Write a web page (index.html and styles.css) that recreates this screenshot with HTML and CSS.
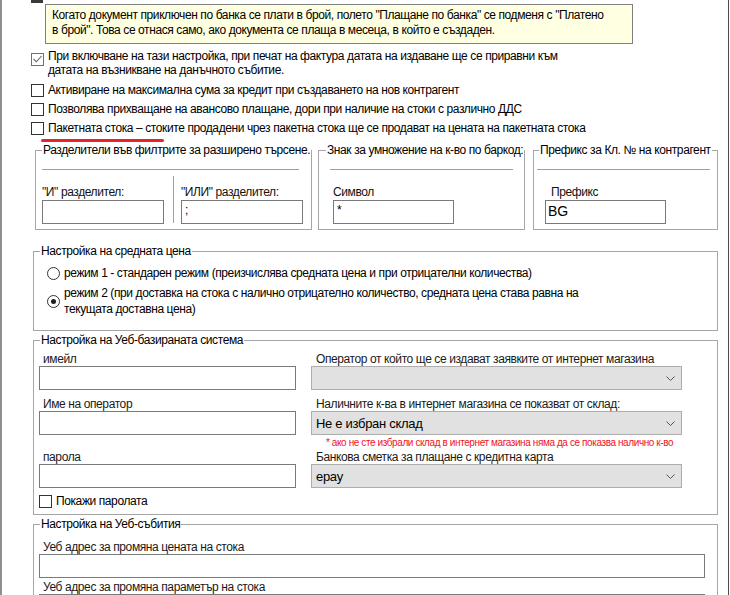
FILE: index.html
```html
<!DOCTYPE html>
<html lang="bg">
<head>
<meta charset="utf-8">
<title>Настройки</title>
<link rel="stylesheet" href="styles.css">
</head>
<body>
<div class="panel">
  <div class="cut-check"></div>
  <div class="tip">Когато документ приключен по банка се плати в брой, полето "Плащане по банка" се подменя с "Платено<br>в брой". Това се отнася само, ако документа се плаща в месеца, в който е създаден.</div>

  <div class="opts">
    <div class="opt opt-first">
      <span class="cb cb-on"><svg viewBox="0 0 11 11" width="11" height="11"><path d="M1.5 4.8 L4.3 7.8 L9.6 2" fill="none" stroke="#606060" stroke-width="1.1"/></svg></span>
      <span class="opt-text">При включване на тази настройка, при печат на фактура датата на издаване ще се приравни към<br>датата на възникване на данъчното събитие.</span>
    </div>
    <div class="opt">
      <span class="cb"></span>
      <span class="opt-text">Активиране на максимална сума за кредит при създаването на нов контрагент</span>
    </div>
    <div class="opt">
      <span class="cb"></span>
      <span class="opt-text">Позволява прихващане на авансово плащане, дори при наличие на стоки с различно ДДС</span>
    </div>
    <div class="opt">
      <span class="cb"></span>
      <span class="opt-text">Пакетната стока – стоките продадени чрез пакетна стока ще се продават на цената на пакетната стока</span>
    </div>
  </div>
  <div class="underline"></div>

  <div class="fs-row">
    <fieldset class="fs fs-sep">
      <legend>Разделители във филтрите за разширено търсене.</legend>
      <div class="fs-hr"></div>
      <div class="sep-cols">
        <div class="sep-col">
          <div class="lbl">"И" разделител:</div>
          <div class="inp"></div>
        </div>
        <div class="vline"></div>
        <div class="sep-col">
          <div class="lbl">"ИЛИ" разделител:</div>
          <div class="inp">;</div>
        </div>
      </div>
    </fieldset>
    <fieldset class="fs fs-mult">
      <legend>Знак за умножение на к-во по баркод:</legend>
      <div class="fs-hr"></div>
      <div class="fs-body">
        <div class="lbl">Символ</div>
        <div class="inp">*</div>
      </div>
    </fieldset>
    <fieldset class="fs fs-pref">
      <legend>Префикс за Кл. № на контрагент</legend>
      <div class="fs-hr"></div>
      <div class="fs-body">
        <div class="lbl lbl-pref">Префикс</div>
        <div class="inp inp-big">BG</div>
      </div>
    </fieldset>
  </div>

  <fieldset class="fs fs-wide fs-avg">
    <legend>Настройка на средната цена</legend>
    <div class="avg-body">
      <div class="radio-row">
        <span class="rb"></span>
        <span>режим 1 - стандарен режим (преизчислява средната цена и при отрицателни количества)</span>
      </div>
      <div class="radio-row">
        <span class="rb rb-on"></span>
        <span>режим 2 (при доставка на стока с налично отрицателно количество, средната цена става равна на<br>текущата доставна цена)</span>
      </div>
    </div>
  </fieldset>

  <fieldset class="fs fs-wide fs-web">
    <legend>Настройка на Уеб-базираната система</legend>
    <div class="web-body">
      <div class="web-col web-left">
        <div class="wlbl">имейл</div>
        <div class="inp"></div>
        <div class="wlbl gap7">Име на оператор</div>
        <div class="inp"></div>
        <div class="wlbl gap15">парола</div>
        <div class="inp"></div>
        <div class="show-pass">
          <span class="cb"></span>
          <span>Покажи паролата</span>
        </div>
      </div>
      <div class="web-col web-right">
        <div class="wlbl">Оператор от който ще се издават заявките от интернет магазина</div>
        <div class="sel"><span></span><svg class="chev" viewBox="0 0 9 5" width="9" height="5"><path d="M0.5 0.5 L4.5 4.5 L8.5 0.5" fill="none" stroke="#555" stroke-width="1"/></svg></div>
        <div class="wlbl gap7">Наличните к-ва в интернет магазина се показват от склад:</div>
        <div class="sel"><span>Не е избран склад</span><svg class="chev" viewBox="0 0 9 5" width="9" height="5"><path d="M0.5 0.5 L4.5 4.5 L8.5 0.5" fill="none" stroke="#555" stroke-width="1"/></svg></div>
        <div class="note">* ако не сте избрали склад в интернет магазина няма да се показва налично к-во</div>
        <div class="wlbl">Банкова сметка за плащане с кредитна карта</div>
        <div class="sel"><span>epay</span><svg class="chev" viewBox="0 0 9 5" width="9" height="5"><path d="M0.5 0.5 L4.5 4.5 L8.5 0.5" fill="none" stroke="#555" stroke-width="1"/></svg></div>
      </div>
    </div>
  </fieldset>

  <fieldset class="fs fs-wide fs-events">
    <legend>Настройка на Уеб-събития</legend>
    <div class="ev-body">
      <div class="wlbl">Уеб адрес за промяна цената на стока</div>
      <div class="inp inp-long"></div>
      <div class="wlbl gap2">Уеб адрес за промяна параметър на стока</div>
      <div class="inp inp-long"></div>
    </div>
  </fieldset>
</div>
</body>
</html>
```

FILE: styles.css
```css
* { box-sizing: border-box; }
html, body { margin: 0; padding: 0; background: #fff; }
body {
  font-family: "Liberation Sans", Arial, sans-serif;
  font-size: 12px;
  letter-spacing: -0.4px;
  color: #000;
}
.panel {
  width: 729px;
  height: 595px;
  border-left: 2px solid #8e8e8e;
  border-right: 1px solid #4b4b4b;
  overflow: hidden;
}
.cut-check {
  margin-left: 29px;
  width: 12px;
  height: 3px;
  background: #3a3a3a;
}
.tip {
  margin: 1px 0 0 43px;
  width: 588px;
  height: 40px;
  border: 1px solid #7f7f7f;
  background: #ffffe1;
  padding: 3px 6px;
  line-height: 15px;
  white-space: nowrap;
}

/* option checkboxes */
.opts {
  margin: 5px 0 0 29px;
  display: flex;
  flex-direction: column;
  gap: 5px;
}
.opt {
  display: flex;
  align-items: flex-start;
  gap: 4px;
  line-height: 14px;
  white-space: nowrap;
}
.opt-first { margin-bottom: 1px; }
.cb {
  width: 13px;
  height: 13px;
  border: 1px solid #333;
  background: #fff;
  flex: none;
  margin-top: 1px;
  display: block;
}
.cb svg { display: block; }
.opt-first .cb { margin-top: 4px; border-color: #707070; }
.underline {
  margin: 4px 0 0 39px;
  width: 123px;
  height: 3px;
  background: #e8232d;
  border-radius: 2px;
}

/* fieldsets */
.fs {
  margin: 0;
  padding: 0;
  border: 1px solid #a6a6a6;
  min-width: 0;
}
legend {
  padding: 0 1px;
  line-height: 14px;
  font-size: 12px;
  white-space: nowrap;
}
.fs-row {
  display: flex;
  margin: 1px 0 0 33px;
}
.fs-sep { width: 277px; margin-right: 6px; padding-bottom: 5px; }
.fs-mult { width: 207px; margin-right: 8px; }
.fs-pref { width: 185px; }
.fs-hr { height: 1px; background: #a0a0a0; margin-top: 12px; }
.fs-sep legend { margin-left: 6px; }
.fs-sep .fs-hr { margin-left: 6px; margin-right: 12px; }
.fs-mult legend { margin-left: 7px; }
.fs-mult .fs-hr { margin-left: 11px; margin-right: 11px; }
.fs-pref legend { margin-left: 5px; }
.fs-pref .fs-hr { margin-left: 3px; margin-right: 7px; }

.sep-cols { display: flex; margin: 6px 0 0 6px; }
.sep-col { width: 122px; padding-top: 9px; }
.vline { width: 1px; background: #a0a0a0; margin: 0 7px 1px 9px; }
.fs-body { padding-top: 15px; }
.fs-mult .fs-body { padding-left: 14px; width: 135px; }
.fs-pref .fs-body { padding-left: 11px; width: 132px; }
.lbl { line-height: 14px; color: #111; white-space: nowrap; }
.lbl-pref { padding-left: 6px; }
.inp {
  height: 24px;
  border: 1px solid #7a7a7a;
  background: #fff;
  padding: 2px 3px;
  line-height: 14px;
  margin-top: 1px;
}
.fs-body .inp, .sep-col .inp { width: 100%; }
.inp-big { font-size: 14px; line-height: 16px; padding: 2px 2px; letter-spacing: 0; }

.fs-wide { width: 685px; margin-left: 31px; }
.fs-wide legend { margin-left: 6px; }
.fs-avg { margin-top: 14px; }
.avg-body {
  padding: 7px 0 13px 13px;
  display: flex;
  flex-direction: column;
  gap: 4px;
}
.radio-row {
  display: flex;
  align-items: center;
  gap: 4px;
  line-height: 16px;
  white-space: nowrap;
}
.rb {
  width: 13px;
  height: 13px;
  border-radius: 50%;
  border: 1px solid #333;
  background: #fff;
  flex: none;
  display: flex;
  align-items: center;
  justify-content: center;
}
.rb-on::after {
  content: "";
  width: 5px;
  height: 5px;
  border-radius: 50%;
  background: #1e1e1e;
}

.fs-web { margin-top: 2px; }
.web-body {
  display: flex;
  gap: 15px;
  padding: 5px 0 6px 5px;
}
.web-col { display: flex; flex-direction: column; }
.web-left { width: 257px; }
.web-right { width: 371px; }
.wlbl { line-height: 14px; padding-left: 4px; color: #1a1a1a; white-space: nowrap; }
.web-right .wlbl { padding-left: 5px; }
.web-col .inp { margin-top: 0; }
.gap7 { margin-top: 7px; }
.gap15 { margin-top: 15px; }
.gap2 { margin-top: 2px; }
.show-pass {
  margin-top: 6px;
  display: flex;
  align-items: center;
  gap: 4px;
  line-height: 14px;
}
.show-pass .cb { margin-top: 0; }
.sel {
  height: 24px;
  border: 1px solid #adadad;
  background: #e1e1e1;
  display: flex;
  align-items: center;
  justify-content: space-between;
  padding: 0 6px 0 4px;
  font-size: 13px;
  letter-spacing: -0.3px;
}
.chev { display: block; }
.note {
  height: 15px;
  line-height: 15px;
  font-size: 10px;
  letter-spacing: -0.4px;
  color: #f0141e;
  padding-left: 15px;
  white-space: nowrap;
}

.fs-events { margin-top: 2px; }
.ev-body { padding: 9px 0 0 5px; }
.ev-body .inp { margin-top: 0; }
.inp-long { width: 666px; }
```
